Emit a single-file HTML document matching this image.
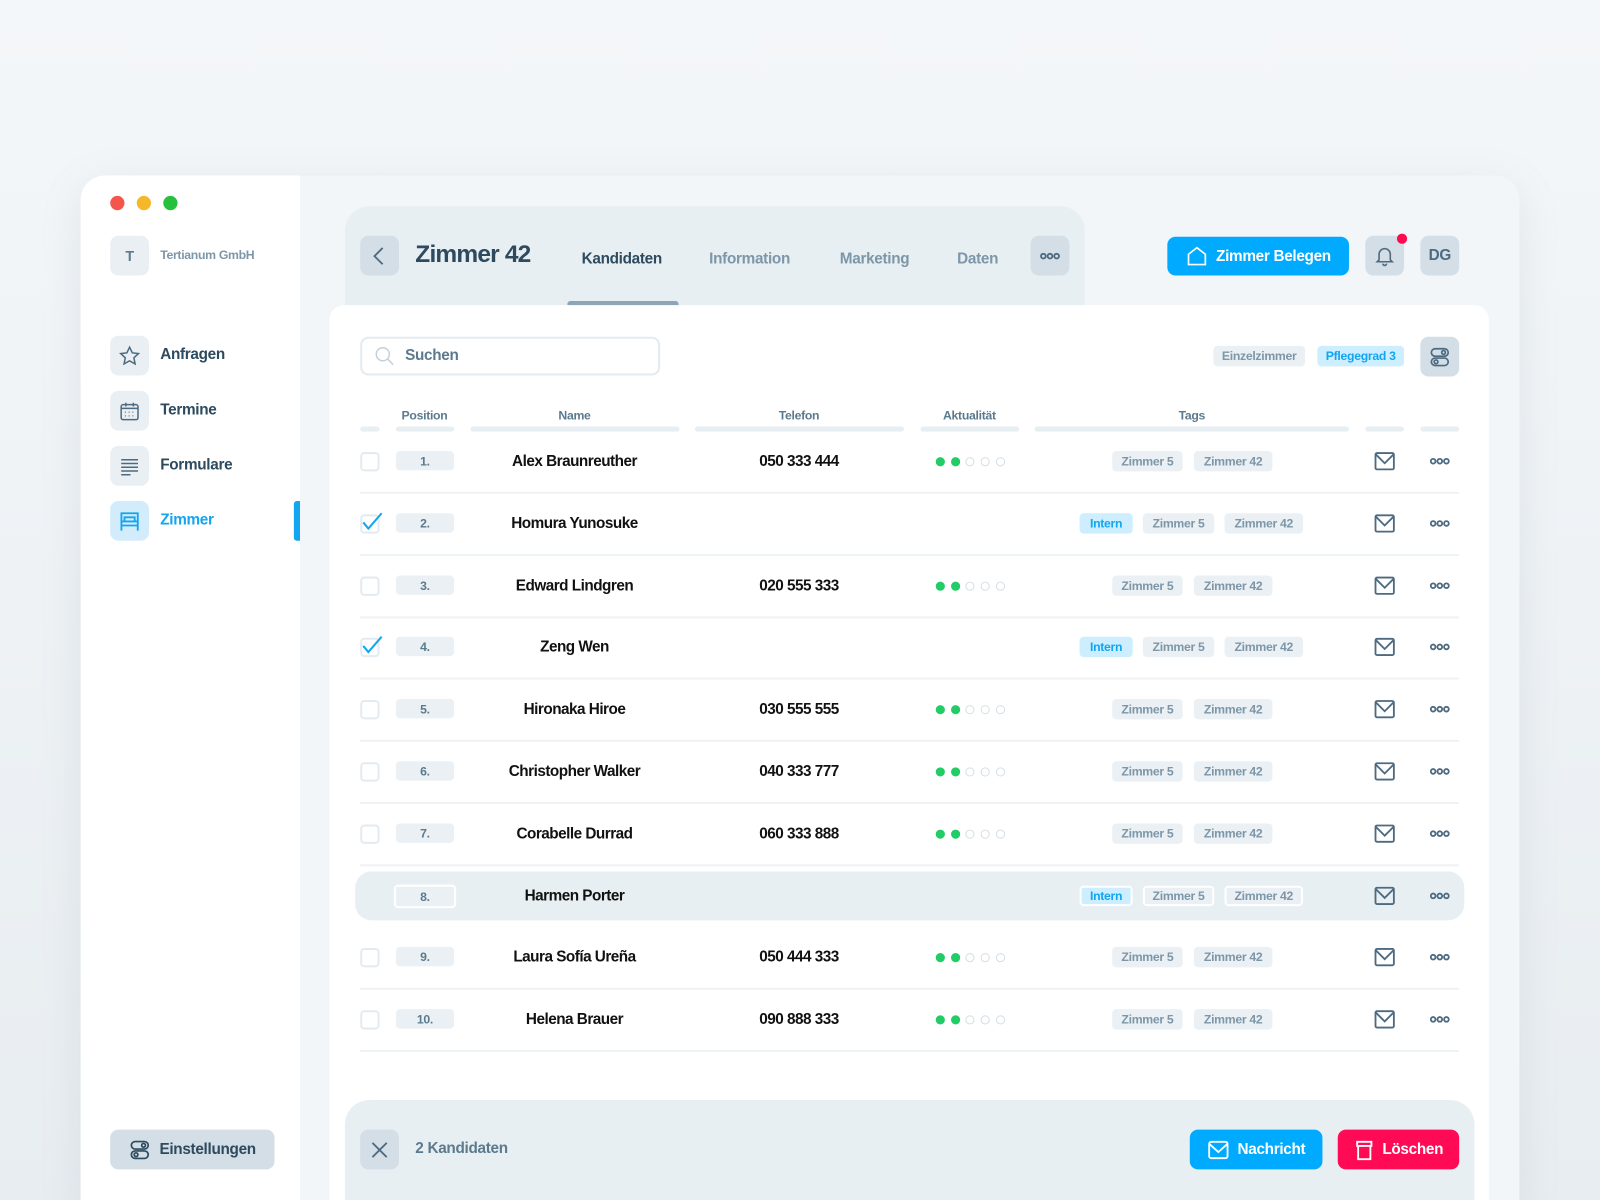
<!DOCTYPE html>
<html><head><meta charset="utf-8"><style>
*{box-sizing:border-box;margin:0;padding:0}
html,body{width:1600px;height:1200px;overflow:hidden;background:#eef2f5}
body{background:linear-gradient(#f4f7f9,#e8edf1);font-family:"Liberation Sans Narrow","Liberation Sans",sans-serif;font-weight:bold;letter-spacing:-0.3px}
#s{position:absolute;left:0;top:0;width:1568px;height:1176px;overflow:hidden;transform:scale(1.0204);transform-origin:0 0}
.a{position:absolute}
.win{left:79px;top:172px;width:1410px;height:1030px;border-radius:24px;background:#f3f6f8;overflow:hidden;box-shadow:0 10px 40px rgba(120,140,160,.15)}
.side{left:0;top:0;width:215px;height:100%;background:#fff}
.ib{width:38px;height:39px;border-radius:8px;background:#e9eff3;display:flex;align-items:center;justify-content:center}
.nl{font-size:15px;color:#2d4a5e}
.bt{background:#d3dee6;border-radius:8px;display:flex;align-items:center;justify-content:center;color:#4d6a80}
.tab{font-size:15px;color:#7d96a8;top:245px}
.chip{height:20px;border-radius:4px;font-size:12px;display:flex;align-items:center;justify-content:center;background:#eaf0f4;color:#7d96a8}
.hd{font-size:12px;color:#5c7a8e;top:400px;transform:translateX(-50%)}
.bar{top:418px;height:5px;border-radius:3px;background:#e8eff3}
.ctr{transform:translate(-50%,-50%);white-space:nowrap}
.nm{font-size:15px;color:#111;letter-spacing:-0.5px}
.sep{height:2px;background:#eef2f5;left:353px;width:1077px}
.cb{width:19px;height:19px;border:2px solid #e4ebf0;border-radius:4px;left:353px}
.pos{width:57px;height:19px;left:388px;border-radius:4px;background:#eaf0f4;font-size:12px;color:#5c7a8e;display:flex;align-items:center;justify-content:center}
.dot{width:9px;height:9px;border-radius:50%;border:1.5px solid #d6dfe5}
.g{background:#22cc66;border-color:#22cc66}
.in{background:#cdeefe;color:#12a5f0}
</style></head><body><div id="s">
<div class="a win">
 <div class="a side"></div>
</div>
<div class="a" style="left:108px;top:192px;width:14px;height:14px;border-radius:50%;background:#f5564c"></div>
<div class="a" style="left:134px;top:192px;width:14px;height:14px;border-radius:50%;background:#f5b82a"></div>
<div class="a" style="left:160px;top:192px;width:14px;height:14px;border-radius:50%;background:#27c03c"></div>
<div class="a ib" style="left:108px;top:231px;font-size:14px;color:#5c7a8e">T</div>
<div class="a" style="left:157px;top:243px;font-size:12px;color:#7d96a8">Tertianum GmbH</div>
<div class="a ib" style="left:108px;top:329px"><svg width="22" height="22" viewBox="0 0 24 24" fill="none" stroke="#4d6a80" stroke-width="1.6"><path d="M12 2.5l2.9 6 6.6.8-4.9 4.5 1.3 6.5L12 17l-5.9 3.3 1.3-6.5L2.5 9.3l6.6-.8z"/></svg></div>
<div class="a nl" style="left:157px;top:339px">Anfragen</div>
<div class="a ib" style="left:108px;top:383px"><svg width="22" height="22" viewBox="0 0 24 24" fill="none" stroke="#4d6a80" stroke-width="1.6"><rect x="3" y="5" width="18" height="16" rx="2"/><path d="M3 9h18M8 3v4M16 3v4"/><path d="M7 13h1M11 13h1M15 13h1M7 17h1M11 17h1M15 17h1" stroke-width="1.4"/></svg></div>
<div class="a nl" style="left:157px;top:393px">Termine</div>
<div class="a ib" style="left:108px;top:437px"><svg width="22" height="22" viewBox="0 0 24 24" fill="none" stroke="#4d6a80" stroke-width="1.6"><path d="M3 5h18M3 9h18M3 13h18M3 17h18M3 21h10"/></svg></div>
<div class="a nl" style="left:157px;top:447px">Formulare</div>
<div class="a ib" style="left:108px;top:491px;background:#d3ecfb"><svg width="24" height="22" viewBox="0 0 24 22" fill="none" stroke="#12a5f0" stroke-width="1.8"><path d="M4 20V3h16v17M4 15h16M4 11h16M7 11V7h10v4"/></svg></div>
<div class="a nl" style="left:157px;top:501px;color:#12a5f0">Zimmer</div>
<div class="a" style="left:288px;top:491px;width:6px;height:39px;border-radius:3px 0 0 3px;background:#12a5f0"></div>
<div class="a bt" style="left:108px;top:1107px;width:161px;height:39px;font-size:15px;color:#2d4a5e;gap:8px"><svg width="22" height="22" viewBox="0 0 24 24" fill="none" stroke="#2d4a5e" stroke-width="1.8"><rect x="3" y="3" width="18" height="8" rx="4"/><rect x="3" y="13" width="18" height="8" rx="4"/><circle cx="16" cy="7" r="2"/><circle cx="8" cy="17" r="2"/></svg>Einstellungen</div>

<div class="a" style="left:338px;top:202px;width:725px;height:110px;border-radius:24px 24px 0 0;background:#e8eff3"></div>
<div class="a bt" style="left:353px;top:231px;width:38px;height:39px"><svg width="16" height="20" viewBox="0 0 16 20" fill="none" stroke="#4d6a80" stroke-width="1.8"><path d="M11 2L3 10l8 8"/></svg></div>
<div class="a" style="left:407px;top:236px;font-size:24px;color:#2d4a5e;letter-spacing:-0.8px">Zimmer 42</div>
<div class="a tab" style="left:570px;color:#2d4a5e">Kandidaten</div>
<div class="a tab" style="left:695px">Information</div>
<div class="a tab" style="left:823px">Marketing</div>
<div class="a tab" style="left:938px">Daten</div>
<div class="a" style="left:556px;top:295px;width:109px;height:6px;border-radius:3px;background:#8fa4b4"></div>
<div class="a bt" style="left:1010px;top:231px;width:38px;height:39px"><svg width="20" height="8" viewBox="0 0 20 8" fill="none" stroke="#4d6a80" stroke-width="1.8"><circle cx="3.5" cy="4" r="2.3"/><circle cx="10" cy="4" r="2.3"/><circle cx="16.5" cy="4" r="2.3"/></svg></div>
<div class="a" style="left:1144px;top:232px;width:178px;height:38px;border-radius:8px;background:#00aaff;color:#fff;font-size:15px;display:flex;align-items:center;justify-content:center;gap:8px"><svg width="22" height="22" viewBox="0 0 24 24" fill="none" stroke="#fff" stroke-width="1.8"><path d="M3 21V10l9-7 9 7v11z"/></svg>Zimmer Belegen</div>
<div class="a bt" style="left:1338px;top:231px;width:38px;height:39px"><svg width="22" height="22" viewBox="0 0 24 24" fill="none" stroke="#4d6a80" stroke-width="1.7"><path d="M6 16V10a6 6 0 0112 0v6l2 2H4zM10 20a2 2 0 004 0"/></svg></div>
<div class="a" style="left:1369px;top:229px;width:10px;height:10px;border-radius:50%;background:#ff0a50"></div>
<div class="a bt" style="left:1392px;top:231px;width:38px;height:39px;font-size:15px">DG</div>

<div class="a" style="left:323px;top:299px;width:1136px;height:900px;border-radius:14px;background:#fff"></div>
<div class="a" style="left:353px;top:330px;width:294px;height:38px;border:2px solid #e4ebf0;border-radius:8px"></div>
<svg class="a" style="left:366px;top:338px" width="22" height="22" viewBox="0 0 24 24" fill="none" stroke="#c3d0d9" stroke-width="1.6"><circle cx="10" cy="10" r="7"/><path d="M15 15l6 6"/></svg>
<div class="a" style="left:397px;top:340px;font-size:15px;color:#5c7a8e">Suchen</div>
<div class="a chip" style="left:1189px;top:339px;width:90px">Einzelzimmer</div>
<div class="a chip in" style="left:1291px;top:339px;width:85px">Pflegegrad 3</div>
<div class="a bt" style="left:1392px;top:330px;width:38px;height:39px"><svg width="22" height="22" viewBox="0 0 24 24" fill="none" stroke="#4d6a80" stroke-width="1.8"><rect x="3" y="3" width="18" height="8" rx="4"/><rect x="3" y="13" width="18" height="8" rx="4"/><circle cx="16" cy="7" r="2"/><circle cx="8" cy="17" r="2"/></svg></div>

<div class="a hd" style="left:416px">Position</div>
<div class="a hd" style="left:563px">Name</div>
<div class="a hd" style="left:783px">Telefon</div>
<div class="a hd" style="left:950px">Aktualität</div>
<div class="a hd" style="left:1168px">Tags</div>
<div class="a bar" style="left:353px;width:19px"></div>
<div class="a bar" style="left:388px;width:57px"></div>
<div class="a bar" style="left:461px;width:205px"></div>
<div class="a bar" style="left:681px;width:205px"></div>
<div class="a bar" style="left:902px;width:97px"></div>
<div class="a bar" style="left:1014px;width:308px"></div>
<div class="a bar" style="left:1338px;width:38px"></div>
<div class="a bar" style="left:1392px;width:38px"></div>

<div id="rows"></div>

<div class="a" style="left:338px;top:1078px;width:1107px;height:120px;border-radius:24px 24px 0 0;background:#e8eff3"></div>
<div class="a bt" style="left:353px;top:1107px;width:38px;height:39px"><svg width="20" height="20" viewBox="0 0 20 20" fill="none" stroke="#4d6a80" stroke-width="1.8"><path d="M3 3l14 14M17 3L3 17"/></svg></div>
<div class="a" style="left:407px;top:1117px;font-size:15px;color:#5c7a8e">2 Kandidaten</div>
<div class="a" style="left:1166px;top:1107px;width:130px;height:39px;border-radius:8px;background:#00aaff;color:#fff;font-size:15px;display:flex;align-items:center;justify-content:center;gap:8px"><svg width="22" height="20" viewBox="0 0 22 20" fill="none" stroke="#fff" stroke-width="1.8"><rect x="2" y="2" width="18" height="16" rx="2"/><path d="M2 4l9 8 9-8"/></svg>Nachricht</div>
<div class="a" style="left:1311px;top:1107px;width:119px;height:39px;border-radius:8px;background:#ff0a55;color:#fff;font-size:15px;display:flex;align-items:center;justify-content:center;gap:8px"><svg width="20" height="22" viewBox="0 0 20 22" fill="none" stroke="#fff" stroke-width="1.8"><path d="M3 3h14v4H3zM4 7v13h12V7"/></svg>Löschen</div>
</div>
<script>
var d=[["1.","Alex Braunreuther","050 333 444",0,0],["2.","Homura Yunosuke","",1,1],["3.","Edward Lindgren","020 555 333",0,0],["4.","Zeng Wen","",1,1],["5.","Hironaka Hiroe","030 555 555",0,0],["6.","Christopher Walker","040 333 777",0,0],["7.","Corabelle Durrad","060 333 888",0,0],["8.","Harmen Porter","",0,1],["9.","Laura Sofía Ureña","050 444 333",0,0],["10.","Helena Brauer","090 888 333",0,0]];
var h="";
d.forEach(function(r,i){
 var y=Math.round(452+i*60.8);var hl=i==7;
 if(hl)h+='<div class="a" style="left:348px;top:854px;width:1087px;height:48px;border-radius:16px;background:#e8eff3"></div>';
 else h+='<div class="a sep" style="top:'+(y+30)+'px"></div>';
 if(!hl){h+='<div class="a cb" style="top:'+(y-9)+'px"></div>';
 if(r[3])h+='<svg class="a" style="left:354px;top:'+(y-12)+'px" width="22" height="20" viewBox="0 0 22 20" fill="none" stroke="#12a5f0" stroke-width="2"><path d="M2 11l5 6L20 2"/></svg>';}
 h+='<div class="a pos" style="top:'+(y-10)+'px;'+(hl?'left:386px;width:61px;height:23px;top:'+(y-11)+'px;border:2px solid #fff;':'')+'">'+r[0]+'</div>';
 h+='<div class="a ctr nm" style="left:563px;top:'+y+'px">'+r[1]+'</div>';
 if(r[2]){h+='<div class="a ctr nm" style="left:783px;top:'+y+'px">'+r[2]+'</div>';
  [921,936,950,965,980].forEach(function(x,k){h+='<div class="a dot'+(k<2?' g':'')+'" style="left:'+(x-4.5)+'px;top:'+(y-4.5)+'px"></div>';});}
 var hs=hl?'border:2px solid #fff;':'';
 if(r[4]){h+='<div class="a chip in" style="left:1058px;top:'+(y-10)+'px;width:52px;'+hs+'">Intern</div><div class="a chip" style="left:1120px;top:'+(y-10)+'px;width:70px;'+hs+'">Zimmer 5</div><div class="a chip" style="left:1200px;top:'+(y-10)+'px;width:77px;'+hs+'">Zimmer 42</div>';}
 else h+='<div class="a chip" style="left:1090px;top:'+(y-10)+'px;width:69px">Zimmer 5</div><div class="a chip" style="left:1170px;top:'+(y-10)+'px;width:77px">Zimmer 42</div>';
 h+='<svg class="a" style="left:1346px;top:'+(y-10)+'px" width="22" height="20" viewBox="0 0 22 20" fill="none" stroke="#4d6a80" stroke-width="1.8"><rect x="2" y="2" width="18" height="16" rx="1.5"/><path d="M2 3l9 9 9-9"/></svg>';
 h+='<svg class="a" style="left:1401px;top:'+(y-4)+'px" width="20" height="8" viewBox="0 0 20 8" fill="none" stroke="#4d6a80" stroke-width="1.8"><circle cx="3.5" cy="4" r="2.3"/><circle cx="10" cy="4" r="2.3"/><circle cx="16.5" cy="4" r="2.3"/></svg>';
});
document.getElementById("rows").outerHTML=h;
</script>
</body></html>
